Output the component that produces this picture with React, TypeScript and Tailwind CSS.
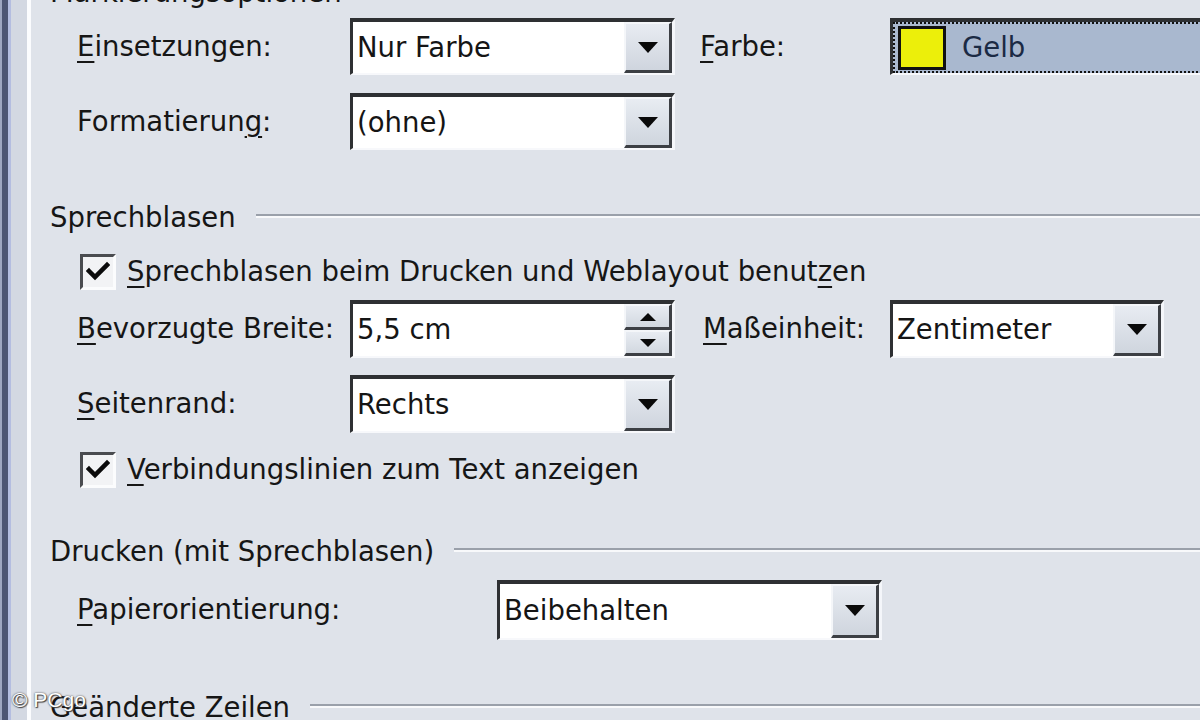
import React from "react";

const FONT = { fontFamily: '"DejaVu Sans", Verdana, sans-serif' };

function U({ children }: { children: React.ReactNode }) {
  return <span className="underline decoration-[2px] underline-offset-[5px]">{children}</span>;
}

function Tri({ up = false, w = 20, h = 11 }: { up?: boolean; w?: number; h?: number }) {
  return (
    <svg width={w} height={h} viewBox={`0 0 ${w} ${h}`}>
      {up ? (
        <polygon points={`0,${h} ${w},${h} ${w / 2},0`} fill="#0a0a0a" />
      ) : (
        <polygon points={`0,0 ${w},0 ${w / 2},${h}`} fill="#0a0a0a" />
      )}
    </svg>
  );
}

function DropBtn() {
  return (
    <div className="w-[48px] h-full flex items-center justify-center bg-gradient-to-b from-[#e8ecf2] to-[#cfd5de] border-t-2 border-l-2 border-t-[#f4f6f9] border-l-[#f4f6f9] border-b-[3px] border-r-[3px] border-b-[#3c3f44] border-r-[#3c3f44]">
      <Tri />
    </div>
  );
}

function Combo({ value, width }: { value: string; width: string }) {
  return (
    <div className={`${width} h-full border-t-[4px] border-l-[3px] border-t-[#2e3033] border-l-[#2e3033] border-b-[2px] border-r-[3px] border-b-[#f7f8fb] border-r-[#f4f6fa]`}>
      <div className="flex h-full bg-white">
        <div className="flex-1 flex items-center pl-[4px] text-[27.5px] text-[#151515] whitespace-nowrap">{value}</div>
        <DropBtn />
      </div>
    </div>
  );
}

function Spin({ value, width }: { value: string; width: string }) {
  return (
    <div className={`${width} h-full border-t-[4px] border-l-[3px] border-t-[#2e3033] border-l-[#2e3033] border-b-[2px] border-r-[3px] border-b-[#f7f8fb] border-r-[#f4f6fa]`}>
      <div className="flex h-full bg-white">
        <div className="flex-1 flex items-center pl-[4px] text-[27.5px] text-[#151515] whitespace-nowrap">{value}</div>
        <div className="w-[48px] h-full flex flex-col">
          <div className="flex-1 flex items-center justify-center bg-gradient-to-b from-[#e8ecf2] to-[#d2d8e0] border-t-2 border-l-2 border-t-[#f4f6f9] border-l-[#f4f6f9] border-b-[3px] border-r-[3px] border-b-[#3c3f44] border-r-[#3c3f44]">
            <Tri up w={16} h={8} />
          </div>
          <div className="flex-1 flex items-center justify-center bg-gradient-to-b from-[#e8ecf2] to-[#d2d8e0] border-t-2 border-l-2 border-t-[#f4f6f9] border-l-[#f4f6f9] border-b-[3px] border-r-[3px] border-b-[#3c3f44] border-r-[#3c3f44]">
            <Tri w={16} h={8} />
          </div>
        </div>
      </div>
    </div>
  );
}

function Check({ children }: { children: React.ReactNode }) {
  return (
    <div className="flex items-center h-full pl-[3px]">
      <div className="w-[36px] h-[36px] border-t-[3px] border-l-[3px] border-t-[#4a4c50] border-l-[#4a4c50] border-b-[3px] border-r-[3px] border-b-[#fbfcfd] border-r-[#fbfcfd] bg-[#f2f3f5] flex items-center justify-center">
        <svg width="24" height="22" viewBox="0 0 24 22">
          <path d="M3 10 L9 16 L21 4" fill="none" stroke="#0b0b0b" strokeWidth="4.5" strokeLinecap="square" />
        </svg>
      </div>
      <div className="ml-[11px] text-[27.5px] text-[#161616] whitespace-nowrap">{children}</div>
    </div>
  );
}

function Header({ text, lineStart }: { text: string; lineStart: string }) {
  return (
    <div className="flex items-center h-[40px]">
      <div className={`${lineStart} text-[27.5px] text-[#161616] whitespace-nowrap`}>{text}</div>
      <div className="flex-1 h-[4px] border-t-2 border-t-[#9aa0aa] border-b-2 border-b-[#f8f9fb] mt-[-4px]" />
    </div>
  );
}

export default function App() {
  return (
    <div className="relative w-[1200px] h-[720px] overflow-hidden bg-[#dfe3ea] flex" style={FONT}>
      {/* left frame rail */}
      <div className="flex h-full shrink-0">
        <div className="w-[2px] bg-[#9ea6c0]" />
        <div className="w-[6px] bg-[#4d5573]" />
        <div className="w-[3px] bg-[#b4bde0]" />
        <div className="w-[16px] bg-[#d3d8e2]" />
        <div className="w-[4px] bg-[#fbfcfe]" />
      </div>

      {/* content */}
      <div className="flex-1 flex flex-col pl-[19px]">
        {/* cut-off group title */}
        <div className="h-[40px] mt-[-27px] flex items-center text-[27.5px] text-[#161616] whitespace-nowrap">
          Markierungsoptionen
        </div>

        <div className="pl-[27px] flex flex-col">
          <div className="mt-[5px] h-[57px] flex items-center">
            <div className="w-[273px] text-[27.5px] text-[#161616]"><U>E</U>insetzungen:</div>
            <Combo value="Nur Farbe" width="w-[325px]" />
            <div className="w-[25px]" />
            <div className="w-[190px] text-[27.5px] text-[#161616]"><U>F</U>arbe:</div>
            <div className="w-[340px] h-full shrink-0 border-t-[4px] border-l-[3px] border-t-[#2e3033] border-l-[#2e3033] border-b-[2px] border-b-[#f7f8fb] bg-white">
              <div className="h-full border-[2px] border-dotted border-[#111] bg-[#a9b8cf] flex items-center pl-[3px]">
                <div className="w-[48px] h-[44px] bg-[#ecef0a] border-[3px] border-[#111]" />
                <div className="ml-[16px] text-[27.5px] text-[#1b2a44]">Gelb</div>
              </div>
            </div>
          </div>

          <div className="mt-[18px] h-[57px] flex items-center">
            <div className="w-[273px] text-[27.5px] text-[#161616]">Formatierun<U>g</U>:</div>
            <Combo value="(ohne)" width="w-[325px]" />
          </div>
        </div>

        <div className="mt-[48px]">
          <Header text="Sprechblasen" lineStart="pr-[20px]" />
        </div>

        <div className="pl-[27px] flex flex-col">
          <div className="mt-[16px] h-[36px]">
            <Check>
              <U>S</U>prechblasen beim Drucken und Weblayout benut<U>z</U>en
            </Check>
          </div>

          <div className="mt-[10px] h-[58px] flex items-center">
            <div className="w-[273px] text-[27.5px] text-[#161616] whitespace-nowrap"><U>B</U>evorzugte Breite:</div>
            <Spin value="5,5 cm" width="w-[325px]" />
            <div className="w-[28px]" />
            <div className="w-[187px] text-[27.5px] text-[#161616] whitespace-nowrap"><U>M</U>aßeinheit:</div>
            <Combo value="Zentimeter" width="w-[274px]" />
          </div>

          <div className="mt-[17px] h-[58px] flex items-center">
            <div className="w-[273px] text-[27.5px] text-[#161616]"><U>S</U>eitenrand:</div>
            <Combo value="Rechts" width="w-[325px]" />
          </div>

          <div className="mt-[19px] h-[36px]">
            <Check>
              <U>V</U>erbindungslinien zum Text anzeigen
            </Check>
          </div>
        </div>

        <div className="mt-[44px]">
          <Header text="Drucken (mit Sprechblasen)" lineStart="pr-[20px]" />
        </div>

        <div className="pl-[27px] flex flex-col">
          <div className="mt-[8px] h-[60px] flex items-center">
            <div className="w-[420px] text-[27.5px] text-[#161616]"><U>P</U>apierorientierung:</div>
            <Combo value="Beibehalten" width="w-[385px]" />
          </div>
        </div>

        <div className="mt-[48px]">
          <Header text="Geänderte Zeilen" lineStart="pr-[20px]" />
        </div>
      </div>

      {/* watermark */}
      <div
        className="absolute left-[12px] top-[684px] text-[21px] text-white whitespace-nowrap"
        style={{ fontFamily: '"Liberation Sans", Arial, sans-serif', textShadow: "0 0 2px #333, 1px 1px 1px #444" }}
      >
        © PCgo
      </div>
    </div>
  );
}
